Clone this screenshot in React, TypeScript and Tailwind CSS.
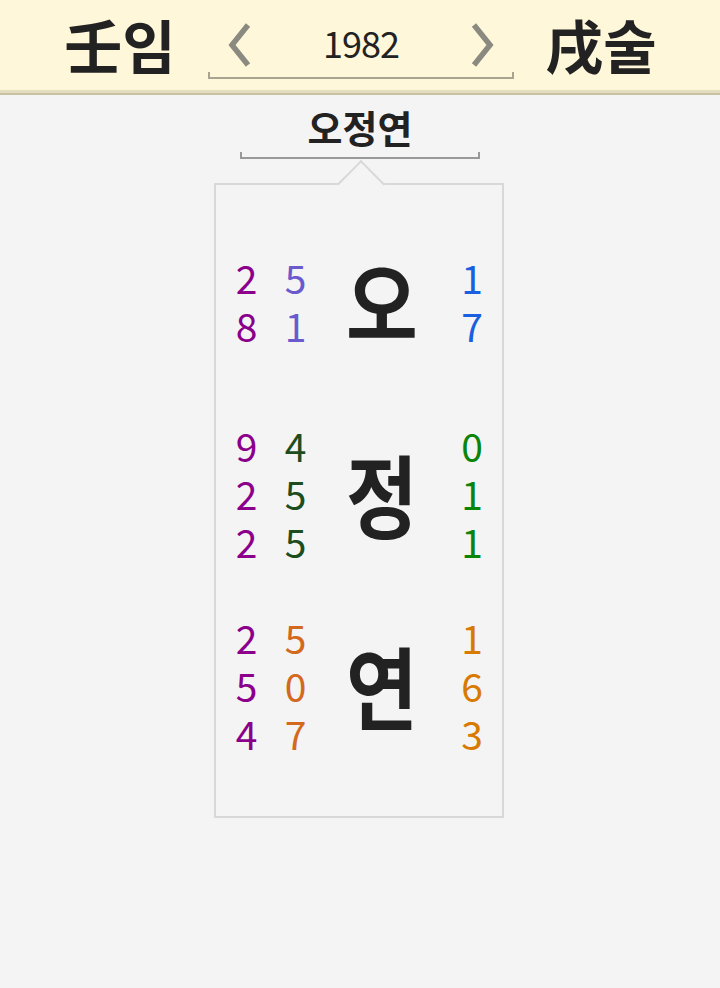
import React from 'react'

const FONT = { fontFamily: '"Noto Sans CJK KR", "Noto Sans", sans-serif' }

type Row = {
  ch: string
  a: string[]
  b: string[]
  c: string[]
  bColor: string
  cColor: string
}

const rows: Row[] = [
  { ch: '오', a: ['2', '8'], b: ['5', '1'], c: ['1', '7'], bColor: 'text-[#6a5acd]', cColor: 'text-[#1a5fe0]' },
  { ch: '정', a: ['9', '2', '2'], b: ['4', '5', '5'], c: ['0', '1', '1'], bColor: 'text-[#1d4d1d]', cColor: 'text-[#0a850a]' },
  { ch: '연', a: ['2', '5', '4'], b: ['5', '0', '7'], c: ['1', '6', '3'], bColor: 'text-[#d2691e]', cColor: 'text-[#d97a00]' },
]

function Chevron({ dir }: { dir: 'left' | 'right' }) {
  return (
    <svg width="30" height="46" viewBox="0 0 30 46" className="text-[#8a8a80]">
      <path
        d={dir === 'left' ? 'M24 3 L8 23 L24 43' : 'M6 3 L22 23 L6 43'}
        fill="none"
        stroke="currentColor"
        strokeWidth="5.5"
      />
    </svg>
  )
}

function Digits({ items, color }: { items: string[]; color: string }) {
  return (
    <div className={`flex flex-col items-center text-[39px] leading-[48px] ${color}`}>
      {items.map((d, i) => (
        <span key={i}>{d}</span>
      ))}
    </div>
  )
}

export default function App() {
  return (
    <div className="w-[720px] h-[988px] bg-[#f4f4f4] flex flex-col" style={FONT}>
      {/* header */}
      <div className="h-[93px] bg-[#fff7da] border-b-[3px] border-[#e4ddbf] shadow-[0_2px_0_#c9c2a2] flex items-center shrink-0">
        <div className="w-[240px] flex justify-center">
          <span className="text-[58px] font-bold text-[#222] leading-none -mt-[2px]">壬임</span>
        </div>
        <div className="w-[306px] -ml-[32px] flex flex-col">
          <div className="flex items-center justify-between px-[16px] h-[60px]">
            <div className="mt-[6px]"><Chevron dir="left" /></div>
            <span className="text-[36px] text-[#222] leading-none tracking-[-1px]">1982</span>
            <div className="mt-[6px]"><Chevron dir="right" /></div>
          </div>
          <div className="h-[7px] border-x-2 border-b-2 border-[#a8a490]" />
        </div>
        <div className="flex-1 flex justify-center -ml-[32px]">
          <span className="text-[58px] font-bold text-[#222] leading-none -mt-[2px]">戌술</span>
        </div>
      </div>

      {/* title */}
      <div className="flex flex-col items-center mt-[9px]">
        <span className="text-[38px] font-bold text-[#222] leading-[50px]">오정연</span>
        <div className="w-[240px] h-[7px] border-x-2 border-b-2 border-[#999] mt-[0px]" />
      </div>

      {/* card */}
      <div className="relative self-start ml-[214px] mt-[24px] w-[290px] h-[635px] border-2 border-[#d8d8d8] bg-[#f4f4f4]">
        <div className="absolute left-[128px] -top-[18px] w-[34px] h-[34px] rotate-45 bg-[#f4f4f4] border-l-2 border-t-2 border-[#d8d8d8]" />
        <div className="relative flex flex-col gap-[48px] pt-[44px] pl-[6px]">
          {rows.map((r, i) => (
            <div key={i} className="h-[144px] flex items-center">
              <div className="w-[49px] flex justify-center">
                <Digits items={r.a} color="text-[#8b008b]" />
              </div>
              <div className="w-[49px] flex justify-center">
                <Digits items={r.b} color={r.bColor} />
              </div>
              <div className="w-[124px] flex justify-center">
                <span className="text-[78px] font-bold text-[#222] leading-none scale-y-[1.15] inline-block -mt-[2px]">{r.ch}</span>
              </div>
              <div className="w-[56px] flex justify-center">
                <Digits items={r.c} color={r.cColor} />
              </div>
            </div>
          ))}
        </div>
      </div>
    </div>
  )
}
